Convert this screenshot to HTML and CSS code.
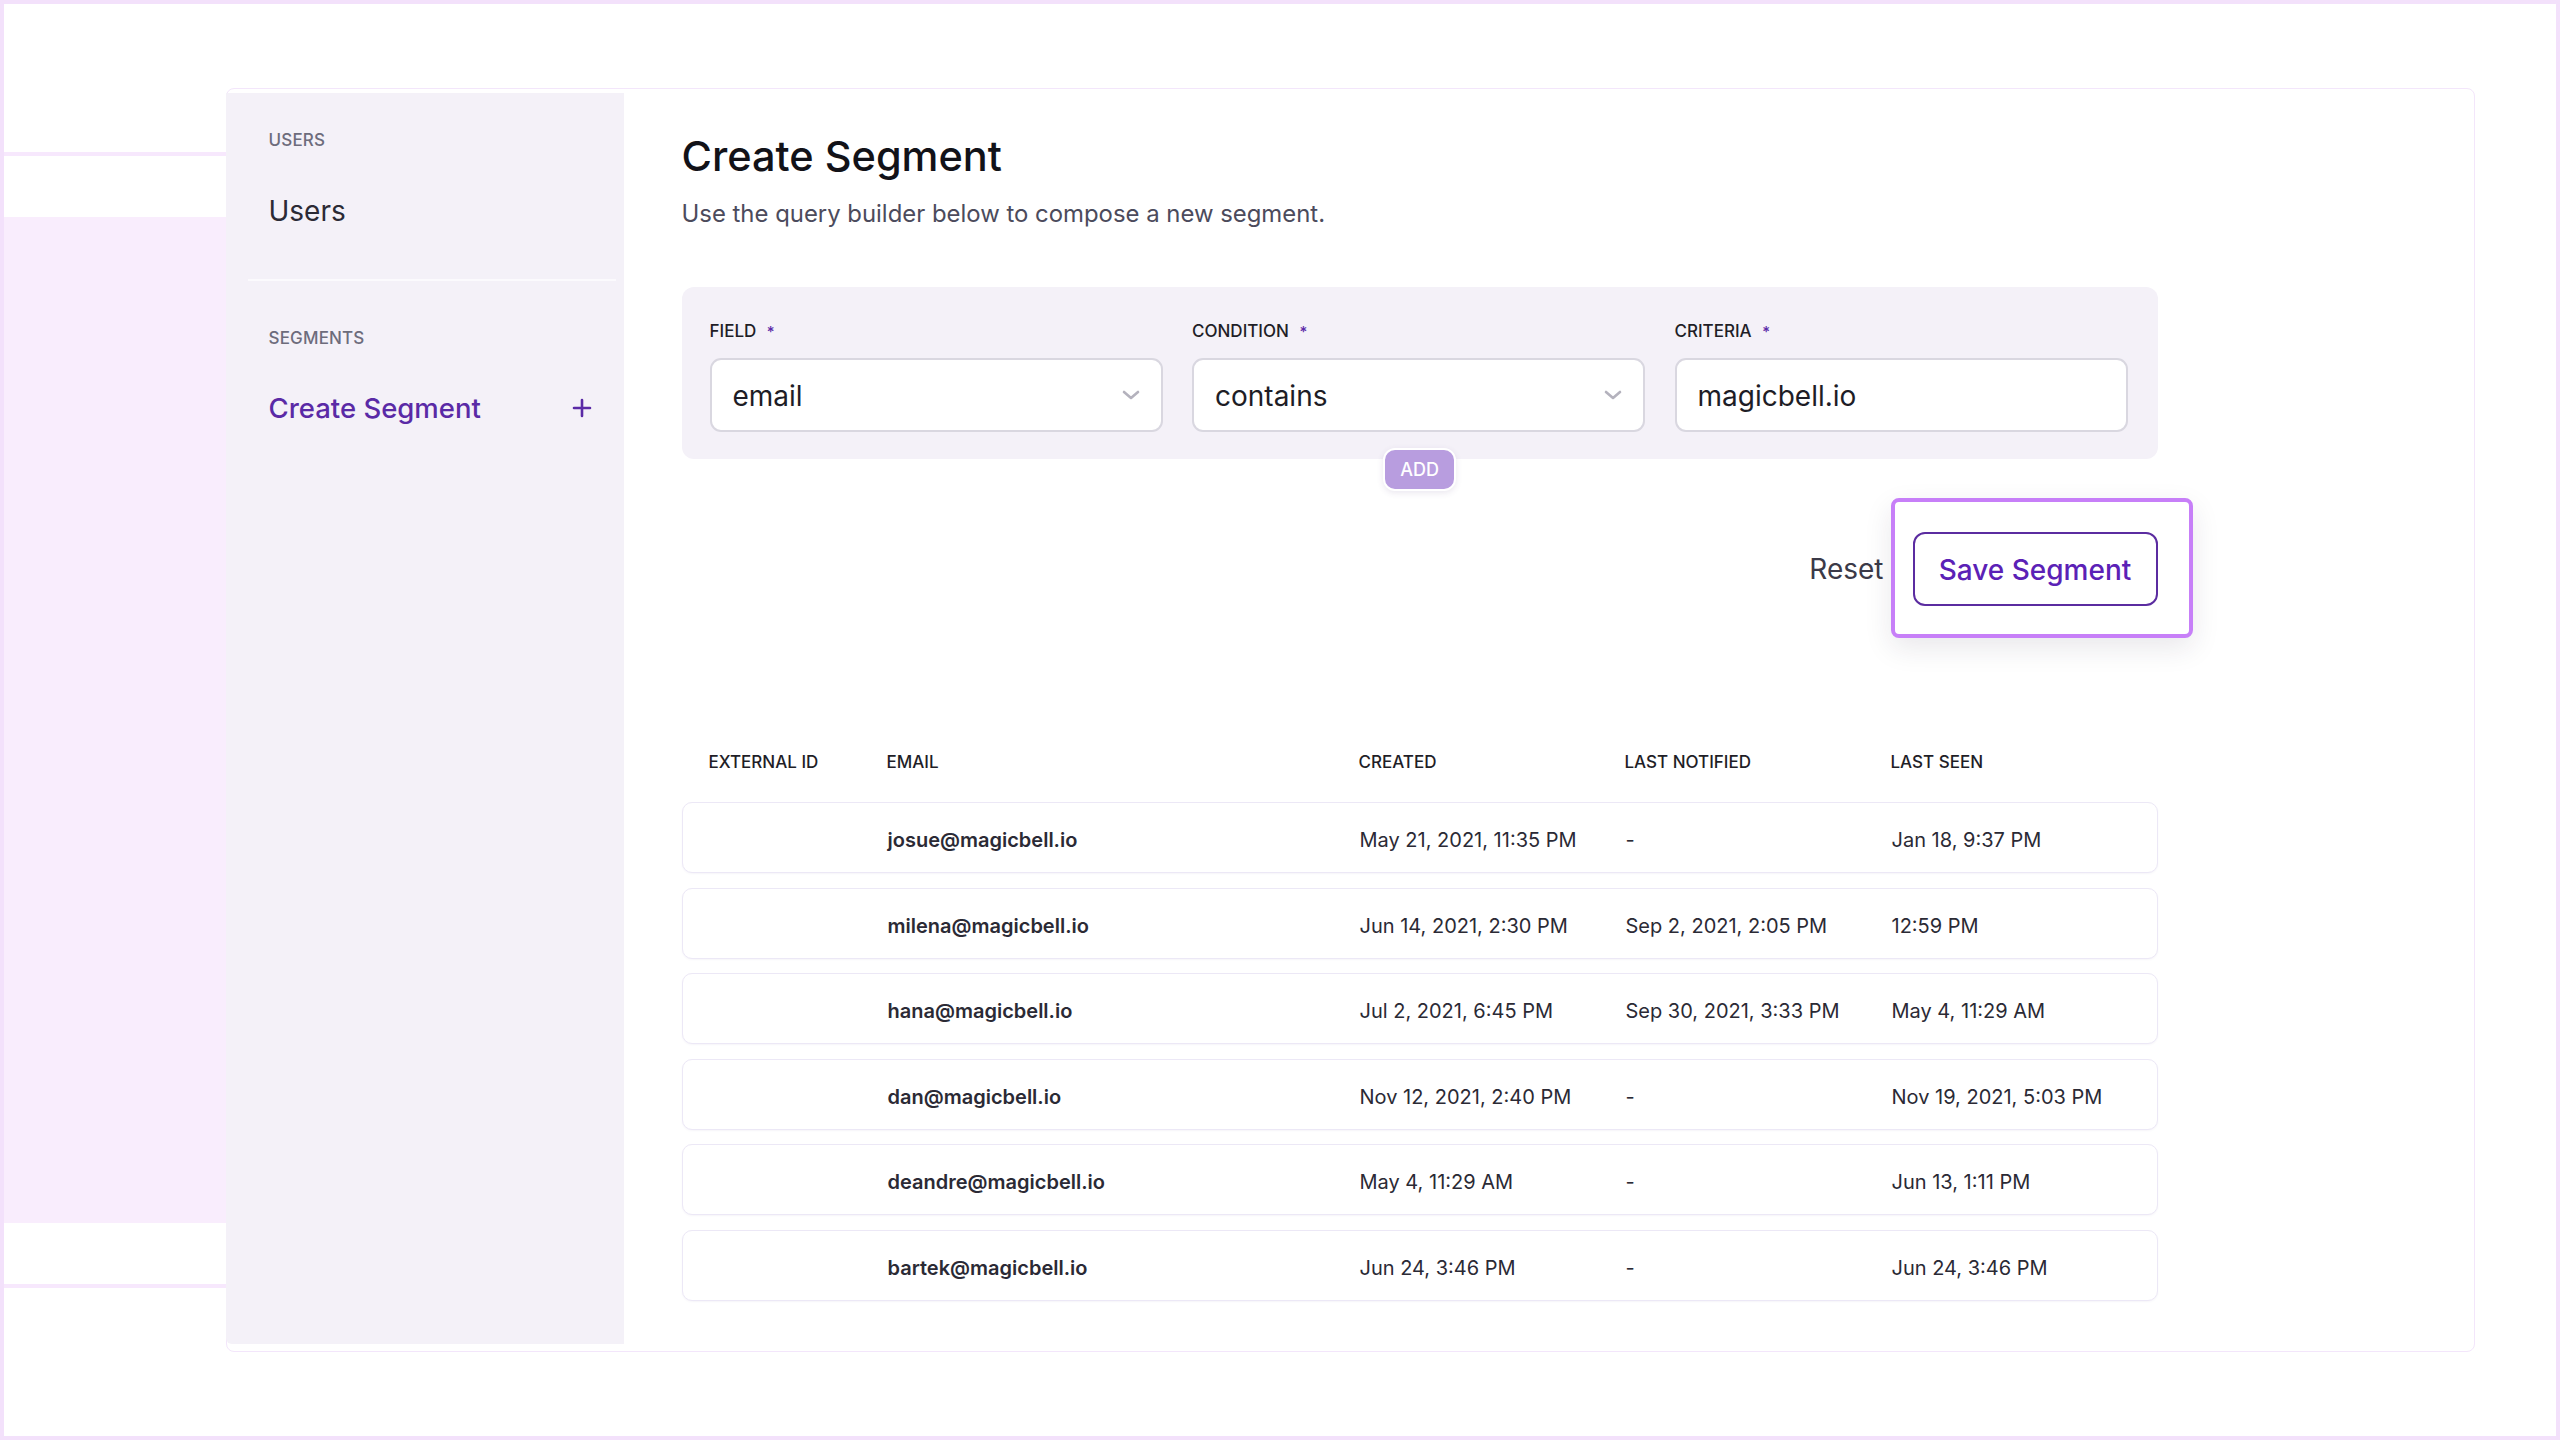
FILE: index.html
```html
<!DOCTYPE html>
<html lang="en">
<head>
<meta charset="utf-8">
<title>Create Segment</title>
<link rel="stylesheet" href="styles.css">
</head>
<body>
<div class="frame">
  <div class="backdrop">
    <div class="bd-line bd-line-top"></div>
    <div class="bd-fill"></div>
    <div class="bd-line bd-line-bottom"></div>
  </div>
  <div class="card">
    <aside class="sidebar">
      <div class="side-section">
        <div class="side-label">USERS</div>
        <div class="side-link">Users</div>
      </div>
      <div class="side-divider"></div>
      <div class="side-section side-section-seg">
        <div class="side-label">SEGMENTS</div>
        <div class="side-link side-link-active">
          <span>Create Segment</span>
          <svg class="plus" viewBox="0 0 20 20" width="20" height="20"><path d="M10 2v16M2 10h16" stroke="#5a2aa6" stroke-width="2.6" stroke-linecap="round" fill="none"/></svg>
        </div>
      </div>
    </aside>
    <main class="main">
      <h1 class="title">Create Segment</h1>
      <p class="subtitle">Use the query builder below to compose a new segment.</p>

      <div class="query">
        <div class="q-field">
          <label class="q-label">FIELD <span class="req">*</span></label>
          <div class="q-input">
            <span>email</span>
            <svg class="chev" viewBox="0 0 18 10" width="18" height="10"><path d="M2 2l7 6 7-6" stroke="#b4b2bd" stroke-width="2.6" stroke-linecap="round" stroke-linejoin="round" fill="none"/></svg>
          </div>
        </div>
        <div class="q-field">
          <label class="q-label">CONDITION <span class="req">*</span></label>
          <div class="q-input">
            <span>contains</span>
            <svg class="chev" viewBox="0 0 18 10" width="18" height="10"><path d="M2 2l7 6 7-6" stroke="#b4b2bd" stroke-width="2.6" stroke-linecap="round" stroke-linejoin="round" fill="none"/></svg>
          </div>
        </div>
        <div class="q-field">
          <label class="q-label">CRITERIA <span class="req">*</span></label>
          <div class="q-input">
            <span>magicbell.io</span>
          </div>
        </div>
      </div>
      <div class="add-row"><button class="add-btn">ADD</button></div>

      <div class="actions">
        <button class="reset-btn">Reset</button>
        <div class="highlight">
          <button class="save-btn">Save Segment</button>
        </div>
      </div>

      <div class="table">
        <div class="t-head">
          <div>EXTERNAL ID</div>
          <div>EMAIL</div>
          <div>CREATED</div>
          <div>LAST NOTIFIED</div>
          <div>LAST SEEN</div>
        </div>
        <div class="t-rows">
          <div class="t-row"><div></div><div class="email">josue@magicbell.io</div><div>May 21, 2021, 11:35 PM</div><div>-</div><div>Jan 18, 9:37 PM</div></div>
          <div class="t-row"><div></div><div class="email">milena@magicbell.io</div><div>Jun 14, 2021, 2:30 PM</div><div>Sep 2, 2021, 2:05 PM</div><div>12:59 PM</div></div>
          <div class="t-row"><div></div><div class="email">hana@magicbell.io</div><div>Jul 2, 2021, 6:45 PM</div><div>Sep 30, 2021, 3:33 PM</div><div>May 4, 11:29 AM</div></div>
          <div class="t-row"><div></div><div class="email">dan@magicbell.io</div><div>Nov 12, 2021, 2:40 PM</div><div>-</div><div>Nov 19, 2021, 5:03 PM</div></div>
          <div class="t-row"><div></div><div class="email">deandre@magicbell.io</div><div>May 4, 11:29 AM</div><div>-</div><div>Jun 13, 1:11 PM</div></div>
          <div class="t-row"><div></div><div class="email">bartek@magicbell.io</div><div>Jun 24, 3:46 PM</div><div>-</div><div>Jun 24, 3:46 PM</div></div>
        </div>
      </div>
    </main>
  </div>
</div>
</body>
</html>
```

FILE: styles.css
```css
* { box-sizing: border-box; }

html, body {
  margin: 0;
  padding: 0;
  background: #ffffff;
}

body {
  font-family: "Inter", "Liberation Sans", sans-serif;
  color: #2b2a35;
}

.frame {
  width: 2560px;
  height: 1440px;
  border: 4px solid #f3e1fb;
  display: flex;
  align-items: flex-start;
  overflow: hidden;
}

/* decorative backdrop at the left */
.backdrop {
  width: 222px;
  flex: 0 0 222px;
  display: flex;
  flex-direction: column;
}
.bd-line {
  height: 4px;
  background: #f7e8fd;
}
.bd-line-top { margin-top: 148px; }
.bd-fill {
  margin-top: 61px;
  height: 1006px;
  background: #f9edfd;
}
.bd-line-bottom { margin-top: 61px; }

/* card */
.card {
  margin-top: 84px;
  width: 2249px;
  height: 1264px;
  border: 1.5px solid #f3e6fb;
  border-radius: 8px;
  display: flex;
  align-items: stretch;
  background: #fff;
}

.sidebar {
  width: 398px;
  flex: 0 0 398px;
  margin: 4px 0 7px -1.5px;
  background: #f4f1f8;
  border-radius: 0 0 0 6px;
}

.side-section {
  padding-left: 43px;
  padding-right: 32px;
}
.side-section:first-child { padding-top: 36.5px; }

.side-label {
  font-size: 17px;
  line-height: 20px;
  font-weight: 500;
  color: #6d6c7c;
  letter-spacing: 0.01em;
}

.side-link {
  font-size: 28px;
  line-height: 34px;
  color: #2b2a35;
  margin-top: 44px;
  display: flex;
  align-items: center;
  justify-content: space-between;
}

.side-divider {
  height: 2px;
  background: #fbfafd;
  margin: 51.5px 8px 0 22px;
}

.side-section-seg { padding-top: 47px; }
.side-section-seg .side-link { margin-top: 43px; }

.side-link-active {
  color: #5a2aa6;
  font-weight: 500;
  font-size: 27.5px;
}
.plus { display: block; }

/* main */
.main {
  flex: 1;
  padding: 42px 0 0 58px;
}
.main > * { width: 1476px; }

.title {
  margin: 0;
  font-size: 41.5px;
  line-height: 50px;
  font-weight: 500;
  color: #121218;
}

.subtitle {
  margin: 17px 0 0;
  font-size: 23.9px;
  line-height: 32px;
  color: #4c4b5c;
}

.query {
  margin-top: 57px;
  background: #f4f1f8;
  border-radius: 12px;
  padding: 34px 30px 27px 28px;
  display: grid;
  grid-template-columns: 1fr 1fr 1fr;
  column-gap: 29.5px;
}

.q-label {
  display: block;
  font-size: 17px;
  line-height: 20px;
  font-weight: 500;
  color: #1f1e27;
}
.req {
  color: #5b2aa8;
  margin-left: 6px;
  font-size: 15px;
}

.q-input {
  margin-top: 16px;
  height: 74px;
  background: #fff;
  border: 2px solid #d9d7e0;
  border-radius: 11px;
  padding: 0 21px 0 21px;
  display: flex;
  align-items: center;
  justify-content: space-between;
  font-size: 28px;
  color: #1e1d26;
}
.q-input span { position: relative; top: 1px; }
.chev { display: block; }

.add-row {
  display: flex;
  justify-content: center;
  margin-top: -11px;
}
.add-btn {
  width: 73px;
  height: 43px;
  border: 2px solid #ffffff;
  border-radius: 12px;
  background: #b89ddf;
  color: #ffffff;
  font-family: inherit;
  font-size: 18px;
  font-weight: 500;
  padding: 0;
  box-shadow: 0 2px 6px rgba(80, 60, 120, 0.12);
}

.actions {
  margin-top: 7px;
  display: flex;
  justify-content: flex-end;
  align-items: center;
}
.reset-btn {
  background: none;
  border: 0;
  padding: 2px 0 0;
  font-family: inherit;
  font-size: 28px;
  color: #3b3a48;
  margin-right: 7px;
}
.highlight {
  margin-right: -35px;
  border: 4px solid #c77ff8;
  border-radius: 8px;
  padding: 30px 31px 28px 18px;
  background: #ffffff;
  box-shadow: 0 10px 28px rgba(40, 30, 60, 0.10);
}
.save-btn {
  display: block;
  width: 245px;
  height: 74px;
  border: 2px solid #5b2ca0;
  border-radius: 12px;
  background: #fff;
  color: #5b21b6;
  font-family: inherit;
  font-size: 28px;
  font-weight: 500;
  padding: 2px 0 0;
}

/* table */
.table { margin-top: 114px; }

.t-head, .t-row {
  display: grid;
  grid-template-columns: 178px 472px 266px 266px 1fr;
  padding-left: 27px;
  align-items: center;
}
.t-head {
  font-size: 17px;
  line-height: 20px;
  font-weight: 500;
  color: #1f1e27;
}
.t-rows {
  margin-top: 30px;
  display: flex;
  flex-direction: column;
  gap: 14.5px;
}
.t-row {
  height: 71px;
  border: 1.5px solid #ece8f6;
  border-radius: 10px;
  background: #fff;
  box-shadow: 0 1px 2px rgba(100, 80, 160, 0.06);
  font-size: 20px;
  color: #2b2a35;
  padding-top: 5px;
}
.t-row .email {
  font-weight: 600;
}
```
